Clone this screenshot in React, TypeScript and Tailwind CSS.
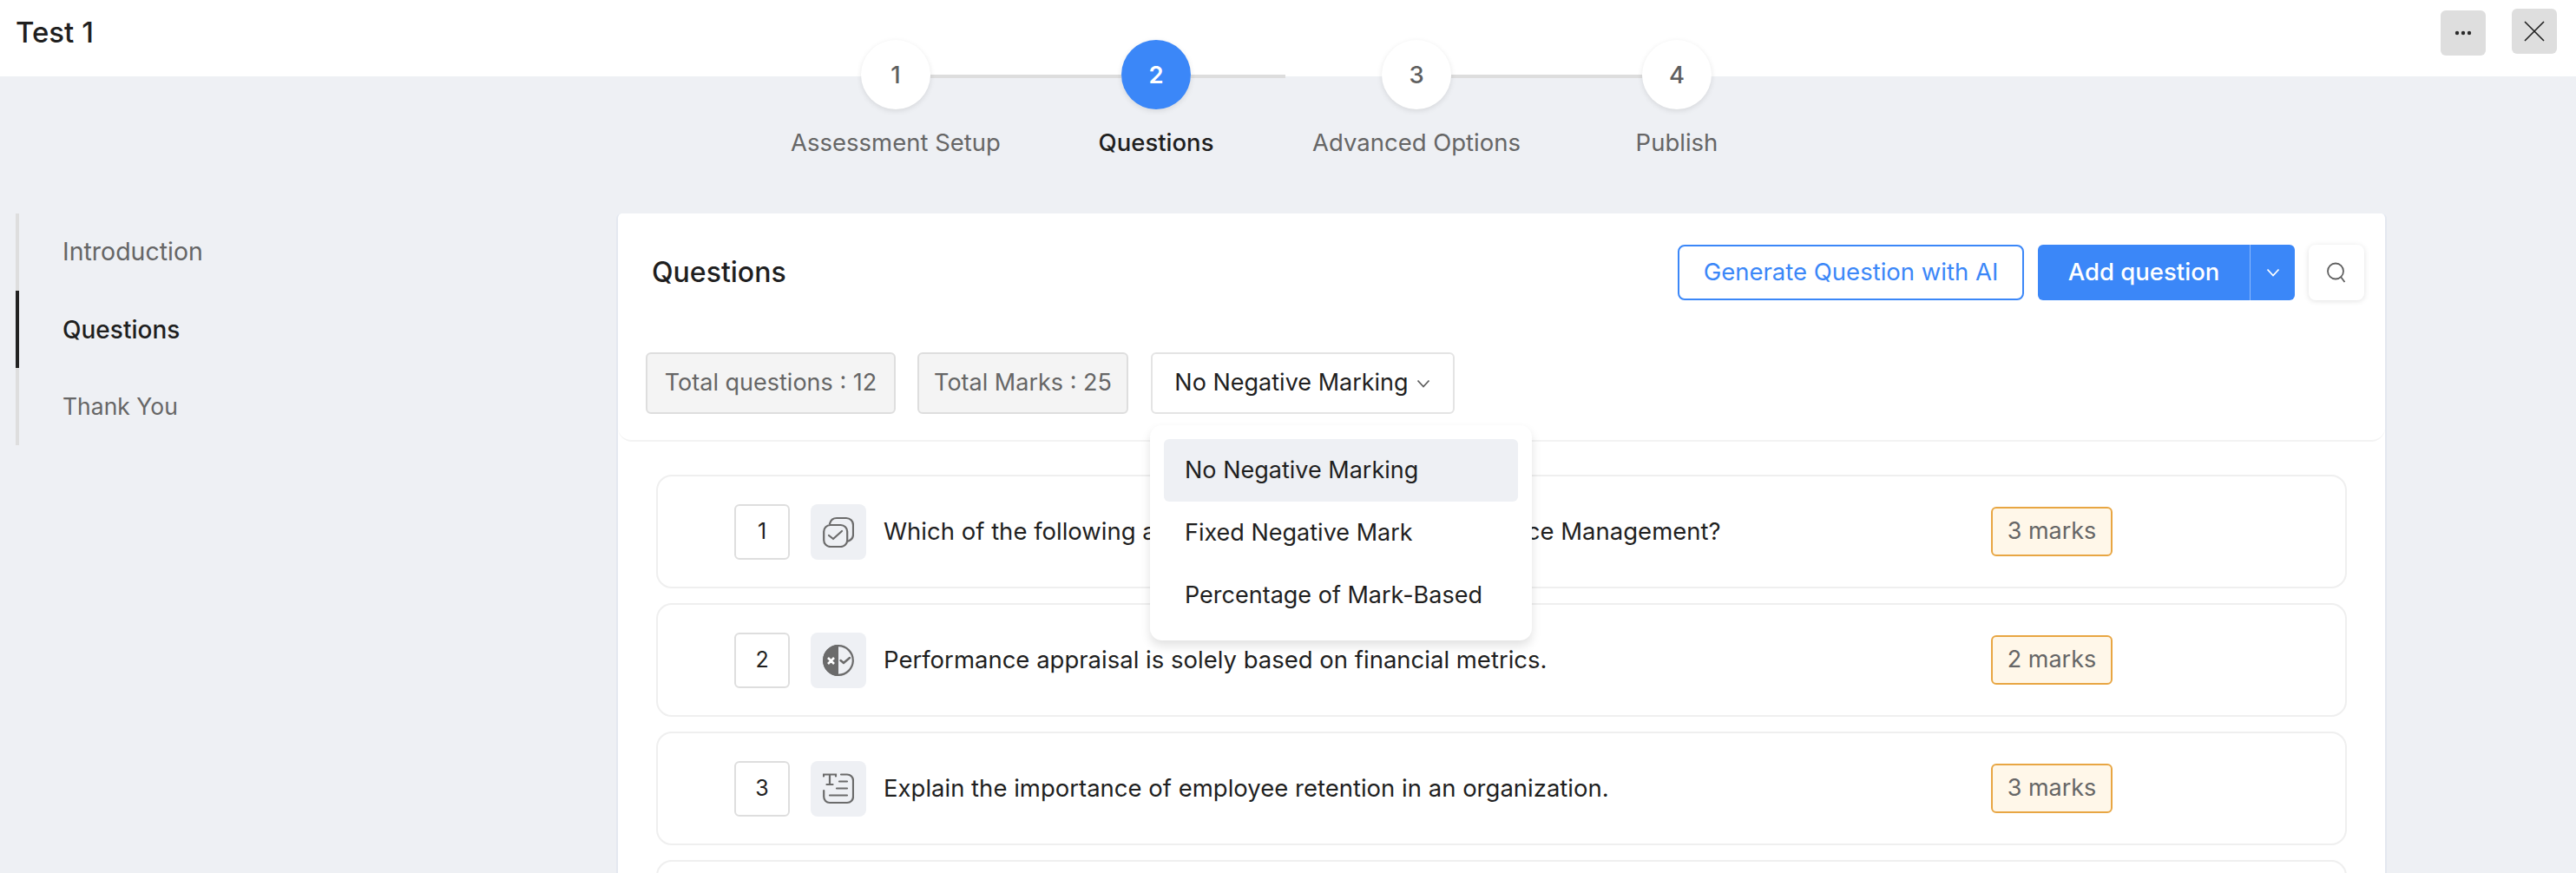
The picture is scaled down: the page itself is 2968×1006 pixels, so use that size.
const steps = [
  { num: 1, label: 'Assessment Setup' },
  { num: 2, label: 'Questions' },
  { num: 3, label: 'Advanced Options' },
  { num: 4, label: 'Publish' },
];

const navItems = ['Introduction', 'Questions', 'Thank You'];

const questions = [
  { num: 1, kind: 'choice', text: 'Which of the following are key components of Performance Management?', marks: '3 marks' },
  { num: 2, kind: 'truefalse', text: 'Performance appraisal is solely based on financial metrics.', marks: '2 marks' },
  { num: 3, kind: 'essay', text: 'Explain the importance of employee retention in an organization.', marks: '3 marks' },
];

const Chevron = ({ className }: { className: string }) => (
  <svg viewBox="0 0 16 10" fill="none" stroke="currentColor" strokeWidth="1.8" className={className}>
    <path d="M1.5 1.5 L8 8.5 L14.5 1.5" />
  </svg>
);

const QuestionIcon = ({ kind }: { kind: string }) => {
  if (kind === 'choice') {
    return (
      <svg viewBox="0 0 36 36" fill="none" stroke="#6b6b6b" strokeWidth="2.2" strokeLinecap="round" strokeLinejoin="round" className="w-9 h-9">
        <rect x="1.2" y="10" width="27" height="25" rx="7.5" />
        <path d="M8 8.5 C9 4.5 12 2 16 2 H27 C31.5 2 35 5.5 35 10 V21 C35 24.5 33 27 29.5 28.5" />
        <path d="M7 22 L12 26 L22 17" />
      </svg>
    );
  }
  if (kind === 'truefalse') {
    return (
      <svg viewBox="0 0 36 36" fill="none" className="w-9 h-9">
        <circle cx="18" cy="18" r="16.8" stroke="#6b6b6b" strokeWidth="2.2" />
        <path d="M18 0 A18 18 0 0 0 18 36 Z" fill="#6b6b6b" />
        <path d="M6 15 L13 22 M13 15 L6 22" stroke="#fff" strokeWidth="2.6" />
        <path d="M20.5 18 L24 21 L31 15" stroke="#6b6b6b" strokeWidth="2.4" strokeLinecap="round" strokeLinejoin="round" />
      </svg>
    );
  }
  return (
    <svg viewBox="0 0 36 36" fill="none" stroke="#6b6b6b" strokeWidth="2.2" strokeLinecap="round" className="w-9 h-9">
      <path d="M1 3.5 V1.5 H15 V3.5 M8 1.5 V13 M4.5 13 H11.5" />
      <path d="M21 1.5 H28 C32 1.5 35 4.5 35 8.5 V27 C35 31 32 34 28 34 H8 C4 34 1.2 31 1.2 27 V20" />
      <path d="M19 9.5 H28 M16 17.5 H28 M8 25.5 H28" />
    </svg>
  );
};

const App = () => {
  return (
    <div className="h-screen overflow-hidden bg-[#eef0f4] font-['Inter',sans-serif] text-[27.5px] text-[#666666]">

      {/* Top bar */}
      <div className="h-[88px] bg-white flex items-start justify-between pl-[18px] pr-[22px]">
        <div className="text-[33px] font-medium text-[#1f1f1f] mt-[13px]">Test 1</div>
        <div className="flex items-start gap-[30px] pt-[10px]">
          <button className="w-[52px] h-[52px] mt-[2px] rounded-[6px] bg-[#dedede] flex items-center justify-center">
            <svg viewBox="0 0 24 6" className="w-6 h-[6px]" fill="#2b2b2b">
              <circle cx="5" cy="3" r="2.2" />
              <circle cx="12" cy="3" r="2.2" />
              <circle cx="19" cy="3" r="2.2" />
            </svg>
          </button>
          <button className="w-[52px] h-[52px] rounded-[6px] bg-[#dedede] flex items-center justify-center">
            <svg viewBox="0 0 24 24" className="w-6 h-6" stroke="#1f1f1f" strokeWidth="1.6" fill="none">
              <path d="M1 1 L23 23 M23 1 L1 23" />
            </svg>
          </button>
        </div>
      </div>

      {/* Stepper */}
      <div className="flex justify-center pr-[4px] -mt-[42px]">
        {steps.map((step) => (
          <div key={step.num} className="relative w-[300px] flex flex-col items-center">
            {step.num === 1 && <div className="absolute left-[190px] w-[220px] top-[40px] h-1 bg-[#dddddd]" />}
            {step.num === 2 && <div className="absolute left-[190px] w-[109px] top-[40px] h-1 bg-[#dddddd]" />}
            {step.num === 3 && <div className="absolute left-[190px] w-[220px] top-[40px] h-1 bg-[#dddddd]" />}
            <div
              className={
                step.num === 2
                  ? 'relative w-20 h-20 pt-[2px] rounded-full bg-[#3b87f8] text-white font-semibold flex items-center justify-center shadow-[0_2px_6px_rgba(0,0,0,0.1)]'
                  : 'relative w-20 h-20 pt-[2px] rounded-full bg-white text-[#5f5f5f] font-medium flex items-center justify-center shadow-[0_2px_6px_rgba(0,0,0,0.1)]'
              }
            >
              {step.num}
            </div>
            <div className={step.num === 2 ? 'mt-[21px] leading-[34px] font-medium text-[#1f1f1f]' : 'mt-[21px] leading-[34px] text-[#666666]'}>
              {step.label}
            </div>
          </div>
        ))}
      </div>

      <div className="flex mt-[65px]">

        {/* Section nav */}
        <div className="w-[710px] shrink-0 pl-[18px]">
          <div className="border-l-4 border-[#dedede] w-[400px]">
            {navItems.map((item) => (
              <div
                key={item}
                className={
                  item === 'Questions'
                    ? 'h-[89px] -ml-1 pl-[50px] flex items-center border-l-4 border-[#222222] font-medium text-[#1f1f1f] text-[28px]'
                    : item === 'Thank You'
                      ? 'h-[89px] -ml-1 pl-[50px] flex items-center border-l-4 border-transparent text-[26.5px]'
                      : 'h-[89px] -ml-1 pl-[50px] flex items-center border-l-4 border-transparent text-[28.5px]'
                }
              >
                {item}
              </div>
            ))}
          </div>
        </div>

        {/* Questions card */}
        <div className="w-[2040px] shrink-0 bg-white rounded-t-[6px] border-x-2 border-[#e4e8f0] h-[800px]">
          <div className="h-[263px] border-b-2 border-[#f3f3f3] rounded-b-[16px]">
            <div className="flex items-center justify-between pl-[39px] pr-[24px] pt-[36px]">
              <div className="text-[32px] font-medium text-[#1f1f1f]">Questions</div>
              <div className="flex items-center gap-4">
                <button className="w-[399px] h-16 rounded-[8px] border-2 border-[#3b87f8] text-[#3b87f8] bg-white">
                  Generate Question with AI
                </button>
                <div className="flex h-16 w-[296px] rounded-[6px] bg-[#3b87f8] text-white">
                  <div className="w-[245px] flex items-center justify-center font-medium border-r border-[#8db8fb]">Add question</div>
                  <div className="flex-1 flex items-center justify-center">
                    <Chevron className="w-4 h-[10px]" />
                  </div>
                </div>
                <button className="w-16 h-16 rounded-[8px] bg-white flex items-center justify-center shadow-[0_1px_6px_rgba(0,0,0,0.12)]">
                  <svg viewBox="0 0 24 24" className="w-6 h-6" fill="none" stroke="#5f5f5f" strokeWidth="1.8">
                    <circle cx="11" cy="10.5" r="9" />
                    <path d="M17 17 L21.5 23" />
                  </svg>
                </button>
              </div>
            </div>

            <div className="relative flex items-center gap-[25px] pl-[32px] mt-[60px]">
              <div className="h-[71px] w-[288px] rounded-[6px] border-2 border-[#dedede] bg-[#f4f4f4] flex items-center justify-center text-[27px]">Total questions : 12</div>
              <div className="h-[71px] w-[243px] rounded-[6px] border-2 border-[#dedede] bg-[#f4f4f4] flex items-center justify-center text-[27px]">Total Marks : 25</div>
              <div className="h-[71px] w-[350px] ml-px rounded-[6px] border-2 border-[#e4e4e4] bg-white text-[#1f1f1f] text-[27px] flex items-center justify-center gap-2">
                No Negative Marking
                <Chevron className="w-[18px] h-[10px] text-[#5f5f5f]" />
              </div>

              {/* Marking dropdown */}
              <div className="absolute z-10 left-[613px] top-[84px] w-[440px] h-[248px] rounded-[14px] bg-white p-4 text-[27px] text-[#1f1f1f] shadow-[0_6px_12px_rgba(0,0,0,0.12)]">
                <div className="h-[72px] rounded-[6px] bg-[#eef0f4] pl-6 flex items-center">No Negative Marking</div>
                <div className="h-[72px] pl-6 flex items-center">Fixed Negative Mark</div>
                <div className="h-[72px] pl-6 flex items-center">Percentage of Mark-Based</div>
              </div>
            </div>
          </div>

          {/* Question rows */}
          <div className="pl-[44px] pr-[44px] pt-[38px] flex flex-col gap-[17px]">
            {questions.map((q) => (
              <div key={q.num} className="h-[131px] rounded-[18px] border-2 border-[#efefef] flex items-center pl-[88px] text-[#1f1f1f]">
                <div className="w-16 h-16 rounded-[6px] border-2 border-[#dedede] flex items-center justify-center text-[25px]">{q.num}</div>
                <div className="w-16 h-16 ml-6 rounded-[8px] bg-[#eef0f4] flex items-center justify-center">
                  <QuestionIcon kind={q.kind} />
                </div>
                <div className="ml-5 w-[1276px]">{q.text}</div>
                <div className="w-[140px] h-[57px] rounded-[6px] border-2 border-[#e8a643] bg-[#fff7e9] text-[#666666] text-[27px] flex items-center justify-center">
                  {q.marks}
                </div>
              </div>
            ))}
            <div className="h-[131px] rounded-[18px] border-2 border-[#efefef]" />
          </div>
        </div>
      </div>
    </div>
  );
};

export default App;
